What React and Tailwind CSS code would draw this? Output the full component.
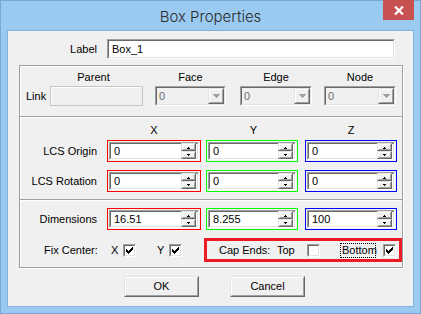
import React from "react";

function Sunken({ className = "", inner = "", children }) {
  return (
    <div
      className={
        "border border-t-[#a0a0a0] border-l-[#a0a0a0] border-r-white border-b-white " +
        className
      }
    >
      <div
        className={
          "h-full border border-t-[#696969] border-l-[#696969] border-r-[#e3e3e3] border-b-[#e3e3e3] " +
          inner
        }
      >
        {children}
      </div>
    </div>
  );
}

function Raised({ className = "", children }) {
  return (
    <div
      className={
        "border border-t-[#e3e3e3] border-l-[#e3e3e3] border-r-[#696969] border-b-[#696969] " +
        className
      }
    >
      <div className="h-full border border-t-white border-l-white border-r-[#a0a0a0] border-b-[#a0a0a0] bg-[#f0f0f0] flex items-center justify-center">
        {children}
      </div>
    </div>
  );
}

function Check({ checked }) {
  return (
    <Sunken className="w-[13px] h-[13px]" inner="bg-white flex items-center justify-center">
      {checked && (
        <svg width="7" height="7" viewBox="0 0 7 7" shapeRendering="crispEdges">
          <path d="M0 2h1v1h1v1h1v-1h1v-1h1v-1h1v-1h1v3h-1v1h-1v1h-1v1h-1v1h-1v-1h-1v-1h-1z" fill="#000" />
        </svg>
      )}
    </Sunken>
  );
}

function Combo() {
  return (
    <Sunken className="h-[20px] w-full" inner="bg-[#f0f0f0] flex items-center justify-between">
      <span className="pl-[2px] text-[#6d6d6d]">0</span>
      <Raised className="w-[16px] h-[16px]">
        <svg width="7" height="4" viewBox="0 0 7 4" shapeRendering="crispEdges">
          <path d="M0 0h7l-3.5 4z" fill="#a0a0a0" />
        </svg>
      </Raised>
    </Sunken>
  );
}

function SpinBtn({ up }) {
  return (
    <Raised className="w-[15px] h-[8px]">
      <svg width="5" height="3" viewBox="0 0 5 3" shapeRendering="crispEdges">
        {up ? <path d="M2 1h1v1h1v1h-3v-1h1z" fill="#000" /> : <path d="M1 0h3v1h-1v1h-1v-1h-1z" fill="#000" />}
      </svg>
    </Raised>
  );
}

function Spin({ value, color, w }) {
  return (
    <div className={"h-[22px] border p-[1px] " + color + " " + w}>
      <Sunken className="h-full" inner="bg-white flex items-center justify-between">
        <span className="pl-[3px]">{value}</span>
        <div className="flex flex-col mr-[1px]">
          <SpinBtn up />
          <SpinBtn />
        </div>
      </Sunken>
    </div>
  );
}

function Separator() {
  return (
    <div>
      <div className="h-[1px] bg-[#a0a0a0]" />
      <div className="h-[1px] bg-white" />
    </div>
  );
}

function XYZRow({ label, values }) {
  return (
    <div className="flex items-center">
      <div className="w-[76px] text-right">{label}</div>
      <div className="w-[10px]" />
      <Spin value={values[0]} color="border-[#ff0000]" w="w-[94px]" />
      <div className="w-[5px]" />
      <Spin value={values[1]} color="border-[#00ff00]" w="w-[92px]" />
      <div className="w-[7px]" />
      <Spin value={values[2]} color="border-[#0000ff]" w="w-[92px]" />
    </div>
  );
}

export default function App() {
  return (
    <div className="w-[421px] h-[314px] bg-[#9bcaf0] border border-[#7ba7d3] font-['Liberation_Sans',Arial,sans-serif] text-[11px] leading-[13px] text-black relative">
      <div className="h-[29px] flex items-center justify-center">
        <span className="font-['Inter',sans-serif] font-light text-[15px] text-[#2b2b2b] pt-[1px]">Box Properties</span>
      </div>
      <div className="absolute top-[-1px] right-[6px] w-[31px] h-[20px] bg-[#c75050] flex items-center justify-center">
        <svg width="10" height="9" viewBox="0 0 10 9">
          <path d="M1 0.5L9 8.5M9 0.5L1 8.5" stroke="#fff" strokeWidth="2.2" />
        </svg>
      </div>

      <div className="mx-[6px] h-[277px] border border-[#83b1dc] bg-[#f0f0f0] flex flex-col">
        <div className="flex items-center pt-[8px]">
          <div className="w-[89px] text-right">Label</div>
          <div className="w-[10px]" />
          <Sunken className="w-[288px] h-[20px]" inner="bg-white flex items-center">
            <span className="pl-[3px]">Box_1</span>
          </Sunken>
        </div>

        <div className="ml-[11px] mt-[6px] w-[384px] h-[203px] border border-[#a0a0a0] shadow-[inset_1px_1px_0_#fff,1px_1px_0_#fff] flex flex-col">
          <div className="h-[50px] pt-[5px] pl-[1px]">
            <div className="flex pl-[29px]">
              <div className="w-[93px] text-center pr-[6px]">Parent</div>
              <div className="w-[12px]" />
              <div className="w-[71px] text-center">Face</div>
              <div className="w-[14px]" />
              <div className="w-[72px] text-center">Edge</div>
              <div className="w-[12px]" />
              <div className="w-[72px] text-center">Node</div>
            </div>
            <div className="flex items-center mt-[2px] pl-[5px]">
              <div className="w-[24px]">Link</div>
              <div className="w-[93px] h-[20px] border border-[#c5c5c5] bg-[#f0f0f0] shadow-[inset_1px_1px_0_#fff]" />
              <div className="w-[12px]" />
              <div className="w-[71px]"><Combo /></div>
              <div className="w-[14px]" />
              <div className="w-[72px]"><Combo /></div>
              <div className="w-[12px]" />
              <div className="w-[72px]"><Combo /></div>
            </div>
          </div>
          <Separator />

          <div className="h-[81px] pt-[6px] pl-[1px]">
            <div className="flex pl-[86px]">
              <div className="w-[94px] text-center">X</div>
              <div className="w-[5px]" />
              <div className="w-[92px] text-center pl-[3px]">Y</div>
              <div className="w-[7px]" />
              <div className="w-[92px] text-center">Z</div>
            </div>
            <div className="mt-[3px] flex flex-col gap-[8px]">
              <XYZRow label="LCS Origin" values={["0", "0", "0"]} />
              <XYZRow label="LCS Rotation" values={["0", "0", "0"]} />
            </div>
          </div>
          <Separator />

          <div className="flex-1 pt-[7px] pl-[1px]">
            <XYZRow label="Dimensions" values={["16.51", "8.255", "100"]} />
            <div className="mt-[8px] flex items-center pl-[23px]">
              <div className="w-[67px]">Fix Center:</div>
              <div className="w-[12px]">X</div>
              <Check checked />
              <div className="w-[21px]" />
              <div className="w-[12px]">Y</div>
              <Check checked />
              <div className="ml-[22px] w-[198px] h-[24px] border-[3px] border-[#ed1c24] flex items-center pl-[12px]">
                <div className="w-[58px]">Cap Ends:</div>
                <div className="w-[30px]">Top</div>
                <Check />
                <div className="w-[20px]" />
                <div className="w-[36px] border border-dotted border-black px-[1px]">Bottom</div>
                <div className="w-[7px]" />
                <Check checked />
              </div>
            </div>
          </div>
        </div>

        <div className="flex mt-[8px] ml-[116px] gap-[31px]">
          <Raised className="w-[75px] h-[21px]">OK</Raised>
          <Raised className="w-[75px] h-[21px]">Cancel</Raised>
        </div>
      </div>
    </div>
  );
}
